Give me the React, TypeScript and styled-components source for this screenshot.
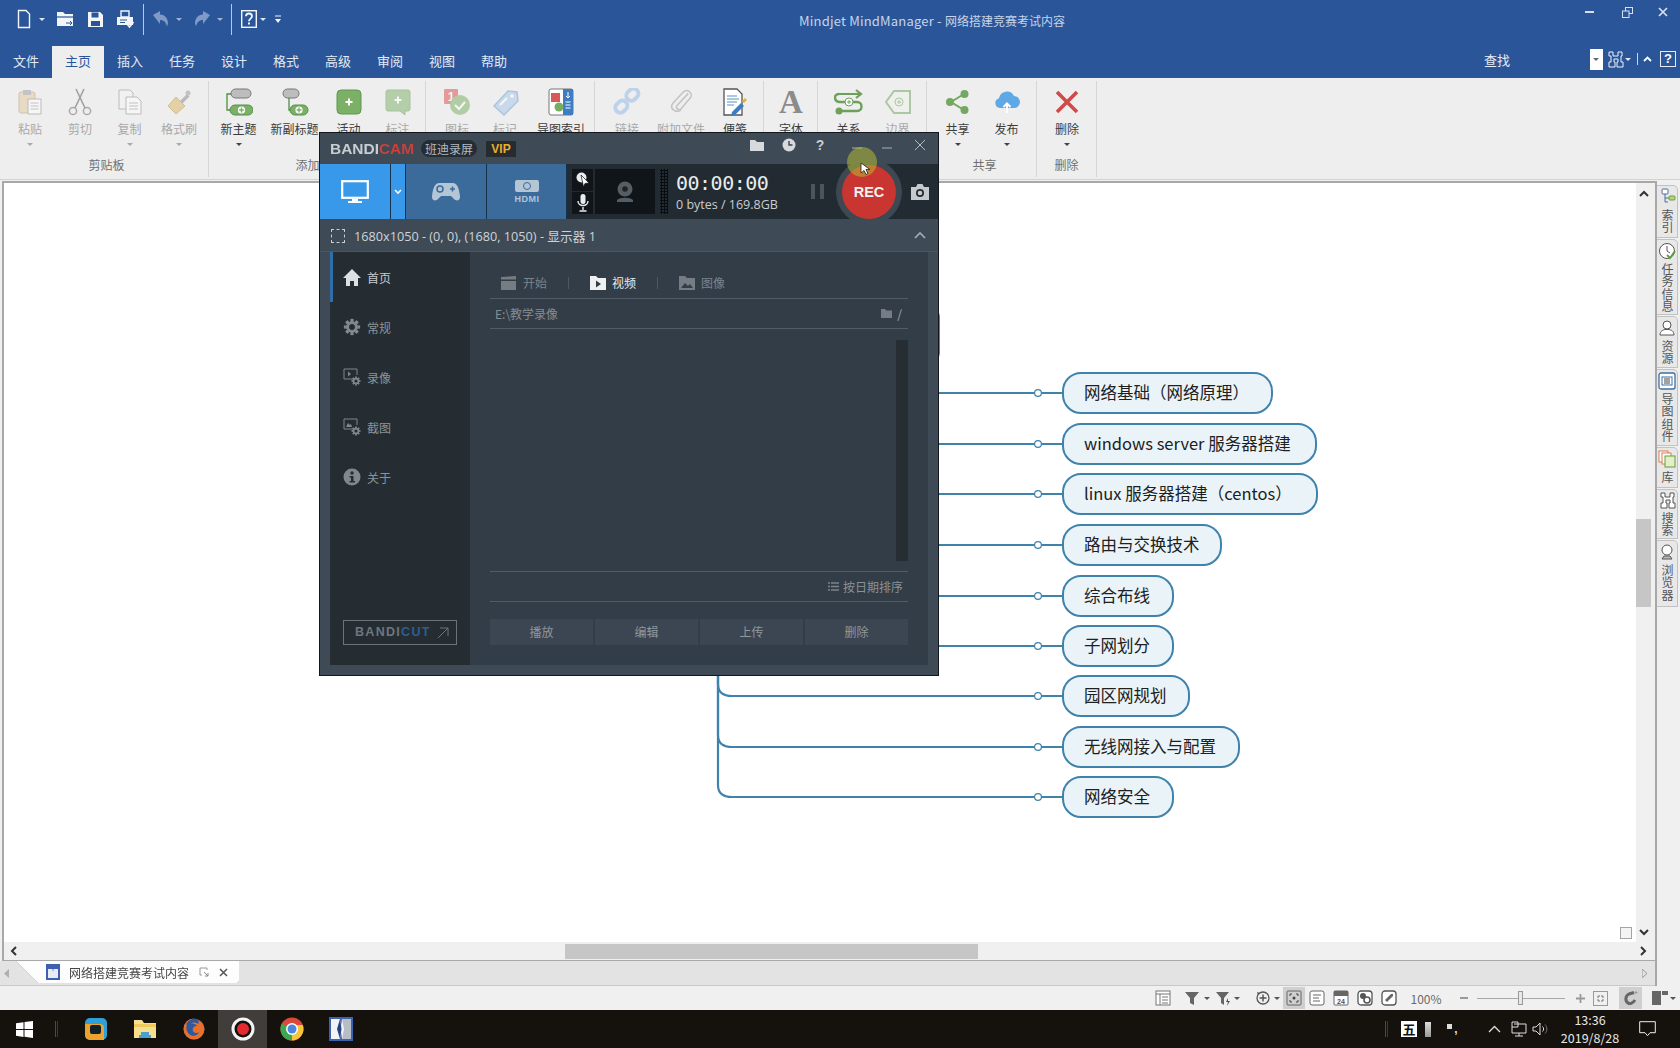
import React from 'react';
import styled, { createGlobalStyle } from 'styled-components';

const Global = createGlobalStyle`
  html, body { margin: 0; padding: 0; background: #fff; }
  * { box-sizing: border-box; }
  body { font-family: "Noto Sans CJK SC", "Noto Sans", "Liberation Sans", sans-serif; }
`;

/* ---------- layout shell ---------- */
const Page = styled.div`
  position: relative; width: 1680px; height: 1048px; overflow: hidden;
  display: flex; flex-direction: column; background: #f0f0f0;
`;
const BlueHead = styled.header`background: #2a5699; height: 78px; display: flex; flex-direction: column;`;
const TitleRow = styled.div`height: 44px; display: flex; align-items: flex-start; position: relative;`;
const Qat = styled.div`display: flex; align-items: center; height: 38px; width: 799px; flex: none;`;
const Title = styled.div`font-size: 13px; line-height: 42px; color: #c6d4e8; letter-spacing: .2px; white-space: nowrap;`;
const TitleCjk = styled.span`font-size: 12px; letter-spacing: 0;`;
const WinBtns = styled.div`margin-left: auto; display: flex; align-items: center; height: 24px;`;
const Slot = styled.div<{ $w: number; $ml: number }>`
  flex: none; width: ${p => p.$w}px; margin-left: ${p => p.$ml}px;
  display: flex; align-items: center; justify-content: center;
`;
const QatSep = styled.div`width: 1px; height: 31px; background: #b9c9e0;`;
const Caret = styled.i<{ $c?: string }>`
  display: block; width: 0; height: 0; border-left: 3px solid transparent; border-right: 3px solid transparent;
  border-top: 3.5px solid ${p => p.$c || '#dfe7f2'};
`;
const TabsRow = styled.nav`height: 34px; display: flex; align-items: flex-end;`;
const MenuTab = styled.div<{ $active?: boolean }>`
  width: 52px; height: 32px; flex: none; text-align: center; font-size: 13px; line-height: 30px;
  background: ${p => p.$active ? '#eeeeee' : 'transparent'}; color: ${p => p.$active ? '#2a5699' : '#e3eaf4'};
`;
const TabsRight = styled.div`margin-left: auto; display: flex; align-items: center; height: 34px; padding-bottom: 4px;`;
const FindBox = styled.div`width: 13px; height: 21px; background: #fff; display: flex; align-items: center; justify-content: center;`;
const FindLabel = styled.span`font-size: 13px; color: #e6ecf5;`;
const HelpBox = styled.div`width: 16px; height: 16px; border: 1px solid #e6ecf5; color: #fff; font: bold 13px/14px "Liberation Sans", sans-serif; text-align: center;`;
const SmallSep = styled.div`width: 1px; height: 12px; background: #c9d6e8;`;

/* ---------- ribbon ---------- */
const Ribbon = styled.section`height: 102px; background: #eeeeee; display: flex; flex: none; border-bottom: 1px solid #d2d2d2;`;
const Group = styled.div<{ $w: number; $pl: number }>`
  width: ${p => p.$w}px; padding-left: ${p => p.$pl}px; flex: none; display: flex; flex-direction: column;
  border-right: 1px solid #d6d6d6; margin: 3px 0 2px;
`;
const GroupItems = styled.div`display: flex; flex: 1;`;
const GroupLabel = styled.div<{ $shift?: number }>`height: 21px; font-size: 12px; line-height: 18px; color: #707070; text-align: center; margin-right: ${p => p.$shift || 0}px;`;
const RItem = styled.div<{ $w: number; $muted?: boolean }>`
  width: ${p => p.$w}px; flex: none; display: flex; flex-direction: column; align-items: center; padding-top: 6px;
  color: ${p => p.$muted ? '#a9a9a9' : '#3c3c3c'};
`;
const RIcon = styled.div<{ $muted?: boolean }>`width: 30px; height: 30px; display: flex; align-items: center; justify-content: center; opacity: ${p => p.$muted ? .5 : 1};`;
const RLabel = styled.div`font-size: 12px; line-height: 16px; margin-top: 4px; white-space: nowrap;`;
const RCaret = styled.div`height: 14px; display: flex; align-items: center;`;
const FontGlyph = styled.span`font: bold 33px/30px "Liberation Serif", serif; color: #8b8b8b;`;

/* ---------- work area ---------- */
const Work = styled.main`flex: 1; display: flex; min-height: 0;`;
const LeftCol = styled.div`width: 1655px; flex: none; display: flex; flex-direction: column; padding-top: 1px;`;
const CanvasFrame = styled.div`
  flex: 1; display: flex; flex-direction: column; margin-left: 2px; min-height: 0;
  border-top: 2px solid #a8a8a8; border-left: 2px solid #a8a8a8; border-bottom: 1px solid #a8a8a8;
`;
const CanvasRow = styled.div`flex: 1; display: flex; min-height: 0;`;
const Canvas = styled.div`position: relative; flex: 1; background: #fff; overflow: hidden;`;
const CornerBox = styled.div`position: absolute; right: 4px; bottom: 3px; width: 12px; height: 12px; border: 1px solid #a4a4a4; background: #f4f4f4;`;
const Lines = styled.svg`position: absolute; left: 0; top: 0;`;
const MapNode = styled.div<{ $x: number; $y: number; $w: number }>`
  position: absolute; left: ${p => p.$x}px; top: ${p => p.$y}px; width: ${p => p.$w}px; height: 42px;
  border: 2.5px solid #3f82ac; border-radius: 19px; background: #e9f3f8; color: #202020;
  font-size: 16.5px; line-height: 36px; padding-left: 20px; white-space: nowrap;
`;
const RootNode = styled.div`
  position: absolute; left: 700px; top: 125px; width: 236px; height: 54px;
  border: 3px solid #2f8fc6; border-radius: 9px; background: #e4f1f9;
`;
const VScroll = styled.div`width: 16px; flex: none; background: #f0f0f0; position: relative; margin-right: 3px; display: flex; flex-direction: column; align-items: center;`;
const VThumb = styled.div`position: absolute; left: 0; top: 336px; width: 15px; height: 88px; background: #c6c6c6;`;
const VTop = styled.div`height: 20px; display: flex; align-items: center;`;
const VBottom = styled.div`margin-top: auto; height: 20px; display: flex; align-items: center;`;
const HScroll = styled.div`height: 18px; flex: none; display: flex; align-items: center; padding: 0 8px 0 6px; background: #f0f0f0;`;
const HThumb = styled.div`width: 413px; height: 15px; background: #c6c6c6; margin-left: 548px; margin-right: auto;`;
const DocTabs = styled.div`height: 25px; flex: none; background: #e3e3e3; border-bottom: 1px solid #c8c8c8; display: flex; padding-right: 8px;`;
const DocArrow = styled.div`width: 16px; display: flex; align-items: center; padding-left: 4px; flex: none;`;
const DocTabWrap = styled.div`filter: drop-shadow(0 0 .6px #777); height: 22px;`;
const DocTab = styled.div`
  width: 223px; height: 22px; background: #fdfdfd; display: flex; align-items: center;
  clip-path: polygon(0 0, 100% 0, 100% calc(100% - 2px), calc(100% - 2px) 100%, 22px 100%);
  padding-left: 30px; font-size: 12px; color: #444;
`;
const DocTabText = styled.span`margin-left: 9px; margin-right: 10px; white-space: nowrap;`;
const DocEnd = styled.div`margin-left: auto; display: flex; align-items: center;`;
const SidePanel = styled.aside`flex: 1; border-left: 2px solid #a8a8a8; margin-top: 1px; padding-top: 4px; display: flex; flex-direction: column; gap: 1px; background: #f0f0f0;`;
const SideTab = styled.div<{ $h: number }>`
  height: ${p => p.$h}px; width: 21px; background: #e8e8e8; border: 1px solid #c2c2c2; border-left: none;
  display: flex; flex-direction: column; align-items: center; padding-top: 2px; border-top-right-radius: 5px;
`;
const SideText = styled.div`writing-mode: vertical-rl; text-orientation: upright; font-size: 12px; line-height: 14px; letter-spacing: .5px; color: #555; margin-top: 3px;`;

/* ---------- status and taskbar ---------- */
const Status = styled.footer`height: 24px; flex: none; background: #f0f0f0; display: flex; align-items: center;`;
const Selected = styled.div<{ $w: number }>`width: ${p => p.$w}px; height: 22px; background: #cfcfcf; display: flex; align-items: center; justify-content: center;`;
const Zoom100 = styled.span`font-size: 12px; color: #6a6a6a;`;
const Slider = styled.div`width: 88px; height: 1px; background: #a8a8a8; position: relative;`;
const SliderThumb = styled.div`position: absolute; left: 41px; top: -7px; width: 5px; height: 14px; background: #e8e8e8; border: 1px solid #999;`;
const Taskbar = styled.footer`height: 38px; flex: none; background: #15120e; display: flex; align-items: stretch;`;
const StartCell = styled.div`width: 48px; flex: none; display: flex; align-items: center; justify-content: center;`;
const TaskSep = styled.div`width: 3px; height: 16px; border-left: 1px solid #4a4a4a; border-right: 1px solid #3a3a3a; align-self: center; margin: 0 13px 0 7px; flex: none;`;
const TraySep = styled.div`width: 3px; height: 16px; border-left: 1px solid #4a4a4a; border-right: 1px solid #3a3a3a; flex: none;`;
const TaskCell = styled.div<{ $active?: boolean }>`width: 49px; flex: none; display: flex; align-items: center; justify-content: center; background: ${p => p.$active ? '#403d3a' : 'transparent'};`;
const Tray = styled.div`margin-left: auto; display: flex; align-items: center;`;
const Ime = styled.div`width: 16px; height: 16px; background: #fff; color: #111; font-size: 13px; line-height: 16px; font-weight: 700; text-align: center;`;
const ImeBar = styled.div`width: 6px; height: 15px; background: linear-gradient(#ddd, #999);`;
const ImeDot = styled.div`width: 5px; height: 5px; background: #ddd; margin-bottom: 6px;`;
const ImeComma = styled.span`color: #ddd; font: bold 12px/12px "Liberation Sans", sans-serif;`;
const Clock = styled.div`color: #e8e8e8; font-size: 12.5px; line-height: 18px; text-align: center; white-space: nowrap;`;

/* ---------- bandicam ---------- */
const BWin = styled.div`
  position: absolute; left: 319px; top: 132px; width: 620px; height: 544px; z-index: 5;
  display: flex; flex-direction: column; background: #3e4a56; border: 1px solid #11171c;
`;
const BHead = styled.div`height: 31px; flex: none; display: flex; align-items: center; padding-left: 10px;`;
const BLogo = styled.div`
  width: 86px; flex: none; font: bold 15px/20px "Liberation Sans", sans-serif; letter-spacing: 0; color: #c7ccd1;
  white-space: nowrap; transform: scaleX(1.03); transform-origin: left;
`;
const BHelpMark = styled.span`font: bold 14px/20px "Liberation Sans", sans-serif; color: #c7ccd1;`;
const BLogoRed = styled.span<{ $c?: string }>`color: ${p => p.$c || '#c8413c'};`;
const BPill = styled.div`margin-left: 5px; height: 17px; width: 56px; border-radius: 9px; background: #252d34; color: #b4bac0; font-size: 12px; line-height: 17px; text-align: center; white-space: nowrap;`;
const BVip = styled.div`margin-left: 9px; width: 30px; height: 16px; background: #262b2e; color: #e8ae2e; font: bold 12px/16px "Liberation Sans", sans-serif; text-align: center;`;
const BHeadIcons = styled.div`margin-left: auto; display: flex; align-items: center; padding: 0 12px 7px 0;`;
const BTool = styled.div`height: 55px; flex: none; display: flex; background: #222b32; overflow: hidden; align-items: stretch;`;
const BTab = styled.div<{ $w: number; $on?: boolean }>`
  width: ${p => p.$w}px; flex: none; display: flex; align-items: center; justify-content: center;
  background: ${p => p.$on ? '#3898ea' : '#3a6b9b'}; border-right: 1px solid #16324d;
`;
const MicCol = styled.div`width: 21px; margin: 5px 2px 5px 5px; flex: none; display: flex; flex-direction: column; gap: 1px;`;
const MicCell = styled.div`flex: 1; background: #10151a; display: flex; align-items: center; justify-content: center;`;
const CamCell = styled.div`width: 60px; margin: 5px 0; flex: none; background: #10151a; display: flex; align-items: center; justify-content: center;`;
const Dots = styled.div`
  width: 8px; margin: 5px 0 5px 5px; flex: none;
  background-image: radial-gradient(#0a0d10 1px, transparent 1.2px); background-size: 3px 3px;
`;
const TimerBox = styled.div`width: 135px; margin-left: 8px; flex: none; display: flex; flex-direction: column; justify-content: center;`;
const TimerText = styled.div`font: 400 20px/26px "DejaVu Sans Mono", monospace; letter-spacing: -.5px; color: #e8ecef; white-space: nowrap;`;
const BytesText = styled.div`font: 400 12.5px/18px "Open Sans", sans-serif; color: #c8cdd2; white-space: nowrap;`;
const Pause = styled.div`width: 14px; flex: none; display: flex; gap: 5px; align-items: center;`;
const PauseBar = styled.i`display: block; width: 4px; height: 15px; background: #4b555f;`;
const RecRing = styled.div`width: 66px; height: 66px; margin: -5.5px 0 0 11px; flex: none; border-radius: 50%; background: #3d4853; display: flex; align-items: center; justify-content: center;`;
const RecBtn = styled.div`width: 54px; height: 54px; border-radius: 50%; background: #c93530; color: #f2f2f2; font: bold 14.5px/54px "Liberation Sans", sans-serif; text-align: center;`;
const CamBtn = styled.div`width: 24px; margin-left: 6px; flex: none; display: flex; align-items: center; justify-content: center;`;
const BSource = styled.div`height: 33px; flex: none; display: flex; align-items: center; padding: 2px 12px 0 11px; border-bottom: 1px solid #4a5662;`;
const DashBox = styled.div`width: 14px; height: 14px; border: 1px dashed #c9cdd1; flex: none;`;
const SourceText = styled.div`margin-left: 9px; font: 400 12.7px/18px "Open Sans", "Noto Sans CJK SC", sans-serif; color: #cfd3d7; white-space: nowrap;`;
const SourceChev = styled.div`margin: -2px 0 0 auto; line-height: 0;`;
const BMain = styled.div`flex: 1; display: flex; margin: 0 10px 10px; min-height: 0;`;
const BSide = styled.div`width: 140px; flex: none; background: #252d33; display: flex; flex-direction: column;`;
const SideItem = styled.div<{ $on?: boolean }>`
  height: 50px; flex: none; display: flex; align-items: center; padding-left: 10px; font-size: 12px;
  border-left: 3px solid ${p => p.$on ? '#2f6ea8' : 'transparent'}; color: ${p => p.$on ? '#c6cbd0' : '#8c9399'};
`;
const SideIcon = styled.div`width: 18px; height: 18px; flex: none; margin-right: 6px; display: flex; align-items: center; justify-content: center;`;
const CutBtn = styled.div`
  margin: auto 13px 20px; height: 25px; width: 114px; border: 1px solid #6c747a; display: flex; align-items: center; justify-content: space-between;
  padding: 0 7px 0 11px; font: 900 12.5px/1 "Liberation Sans", sans-serif; letter-spacing: 1.3px; color: #6f767c;
`;
const BContent = styled.div`flex: 1; background: #333d47; padding: 0 20px 20px; display: flex; flex-direction: column; min-width: 0;`;
const CTabs = styled.div`height: 47px; flex: none; display: flex; align-items: center; padding: 15px 0 0 11px; gap: 21px; border-bottom: 1px solid #515c67;`;
const CTab = styled.div<{ $on?: boolean }>`display: flex; align-items: center; gap: 6px; font-size: 12px; color: ${p => p.$on ? '#e8ebee' : '#7c848b'};`;
const CDivider = styled.div`width: 1px; height: 12px; background: #4d5863;`;
const PathRow = styled.div`height: 30px; flex: none; display: flex; align-items: center; padding: 0 6px 0 5px; font-size: 12px; color: #858c93; border-bottom: 1px solid #515c67;`;
const PathEnd = styled.div`margin-left: auto; display: flex; align-items: center; gap: 5px; color: #a6acb2;`;
const ListArea = styled.div`flex: 1; display: flex; justify-content: flex-end; padding: 11px 0 10px; border-bottom: 1px solid #515c67;`;
const ListBar = styled.div`width: 12px; background: #262e34;`;
const SortRow = styled.div`height: 30px; flex: none; display: flex; align-items: center; justify-content: flex-end; gap: 4px; padding-right: 5px; font-size: 12px; color: #8a9198; border-bottom: 1px solid #515c67;`;
const ActRow = styled.div`margin-top: 17px; height: 26px; flex: none; display: flex; gap: 2px;`;
const ActBtn = styled.div`flex: 1; background: #3b4652; color: #90979d; font-size: 12px; line-height: 26px; text-align: center;`;
const Spot = styled.div`position: absolute; left: 527px; top: 14px; width: 30px; height: 30px; border-radius: 50%; background: rgba(190,198,50,.5); z-index: 2;`;
const Pointer = styled.svg`position: absolute; left: 540px; top: 29px; z-index: 3;`;

/* ---------- helpers ---------- */
type P = { c: number; w: number; n: React.ReactNode };
const place = (start: number, items: P[]) => {
  let end = start;
  return items.map((it, i) => {
    const ml = i === 0 && start < 0 ? 0 : it.c - it.w / 2 - end;
    end = it.c + it.w / 2;
    return <Slot key={i} $w={it.w} $ml={ml}>{it.n}</Slot>;
  });
};
const S = (w: number, h: number, n: React.ReactNode, vb?: string) => <svg width={w} height={h} viewBox={vb || `0 0 ${w} ${h}`}>{n}</svg>;

/* ---------- qat icons ---------- */
const W = '#f2f5fa';
const qNew = S(14, 20, <path d="M1.5 1.5H9l3.5 3.5v13.5h-11z" fill="none" stroke={W} strokeWidth="1.4" />);
const qOpen = S(18, 18, <><path d="M1 2h6l2 2h8v12H1z" fill={W} /><path d="M1 7h16" stroke="#2a5699" strokeWidth="1.2" /><path d="M10 13h6M14 11l2 2-2 2" stroke="#2a5699" fill="none" /></>);
const qSave = S(17, 17, <><path d="M1 1h12l3 3v12H1z" fill={W} /><path d="M4.5 1.5h7v5h-7z" fill="#2a5699" /><path d="M4 10h9v5H4z" fill="#2a5699" /></>);
const qPrint = S(18, 19, <><path d="M5 1h8v6H5z" fill="none" stroke={W} strokeWidth="1.4" /><path d="M1 7h16v8H1z" fill={W} /><path d="M4 10h7M4 12.5h5" stroke="#2a5699" /><path d="M11 14l2.5 3 4-5" stroke={W} strokeWidth="1.6" fill="none" /></>);
const arrowPath = 'M1 5l7-4v3.500c5 0 8 4 8 9l-1 3c-1-4-3-6.500-7-6.500V14z';
const qUndo = S(18, 18, <path d={arrowPath} fill="#7f9ac4" />);
const qRedo = S(18, 18, <path d={arrowPath} fill="#7f9ac4" transform="translate(18 0) scale(-1 1)" />);
const qHelp = S(16, 18, <><rect x=".7" y=".7" width="14.600" height="16.600" fill="none" stroke={W} strokeWidth="1.400" /><path d="M5 6.200c0-3.600 6-3.600 6 0 0 2.500-3 2.300-3 5" fill="none" stroke={W} strokeWidth="1.800" /><rect x="7" y="12.500" width="2" height="2" fill={W} /></>);
const qCustom = S(8, 9, <><path d="M1 1h6" stroke={W} /><path d="M1 4h6L4 8z" fill={W} /></>);
const binoPath = 'M2 1h4v4h5V1h4v4h-1v6h2v5h-6v-5h1V8H7v3h1v5H2v-5h2V5H2z';

/* ---------- ribbon icons ---------- */
const G = '#7cb067';
const pillPlus = (x: number, y: number, w: number) => <><rect x={x} y={y} width={w} height="10" rx="5" fill={G} stroke="#55904a" /><circle cx={x + w / 2} cy={y + 5} r="3.600" fill="#fff" /><path d={`M${x + w / 2 - 2.400} ${y + 5}h4.800M${x + w / 2} ${y + 2.600}v4.800`} stroke={G} strokeWidth="1.400" /></>;
const iPaste = S(26, 26, <><rect x="2" y="3" width="16" height="21" rx="2" fill="#e4c89a" stroke="#b69868" /><rect x="6" y="1" width="8" height="5" fill="#9a9a9a" /><path d="M11 10h13v15H11z" fill="#fff" stroke="#888" /><path d="M13.500 14h8M13.500 17h8M13.500 20h8" stroke="#999" /></>);
const iScissor = S(24, 28, <><circle cx="5" cy="23" r="3.600" fill="none" stroke="#666" strokeWidth="1.500" /><circle cx="19" cy="23" r="3.600" fill="none" stroke="#666" strokeWidth="1.500" /><path d="M7 20L16 1M17 20L8 1" stroke="#555" strokeWidth="1.600" /></>);
const iCopy = S(26, 26, <><path d="M2 1h11l3 3v16H2z" fill="#f4f4f4" stroke="#8a8a8a" /><path d="M9 8h11l4 4v13H9z" fill="#fff" stroke="#8a8a8a" /><path d="M12 14h9M12 17h9M12 20h9" stroke="#999" /></>);
const iBrush = S(26, 26, <><path d="M14 12l7-7 2.500 2.500-7 7z" fill="#888" /><circle cx="22" cy="4" r="2.500" fill="#999" /><path d="M10 8l9 9-9 8-8-8z" fill="#dcb35e" stroke="#b58e3c" /></>);
const iNewTopic = S(28, 28, <><rect x="6" y="1" width="20" height="9" rx="4.500" fill="#bdbdbd" stroke="#777" /><path d="M6 6H2v16h5" fill="none" stroke="#4f8f43" strokeWidth="1.300" />{pillPlus(5, 17, 23)}</>);
const iNewSub = S(28, 28, <><rect x="2" y="1" width="16" height="9" rx="4.500" fill="#bdbdbd" stroke="#777" /><path d="M8 10v12h3" fill="none" stroke="#4f8f43" strokeWidth="1.300" />{pillPlus(9, 17, 18)}</>);
const iActivity = S(26, 26, <><rect x="1" y="1" width="24" height="24" rx="4" fill={G} stroke="#5c9a4c" /><path d="M13 9.500v7M9.500 13h7" stroke="#fff" strokeWidth="2" /></>);
const iCallout = S(26, 26, <><path d="M3 1h20a2 2 0 012 2v17a2 2 0 01-2 2h-3v4l-5-4H3a2 2 0 01-2-2V3a2 2 0 012-2z" fill={G} stroke="#5c9a4c" /><path d="M13 7.500v7M9.500 11h7" stroke="#fff" strokeWidth="2" /></>);
const iMarkers = S(28, 28, <><rect x="1" y="1" width="14" height="15" rx="1" fill="#d8484a" /><text x="8" y="13" fontSize="12" fontFamily="Liberation Sans" fill="#fff" textAnchor="middle" fontWeight="700">1</text><circle cx="17" cy="17" r="10" fill="#77ad5f" /><path d="M12 17l4 4 6-7" stroke="#fff" strokeWidth="2" fill="none" /></>);
const iTag = S(28, 28, <><path d="M3 18L17 3l9 1 1 9-14 14z" fill="#a5c6ea" stroke="#6d9ccf" strokeWidth="1.500" /><path d="M9 17l7-7" stroke="#fff" strokeWidth="2" /><circle cx="21" cy="8" r="1.800" fill="#fff" /></>);
const iIndex = S(26, 28, <><rect x="1" y="1" width="24" height="26" rx="2" fill="#fff" stroke="#777" /><rect x="15" y="1" width="10" height="26" fill="#3e7dc2" /><rect x="3" y="5" width="9" height="9" fill="#d9585a" /><circle cx="11" cy="19" r="4.500" fill="#77ad5f" /><path d="M20 4v6M18 8l2 2 2-2M17.500 14h5M17.500 17h5M17.500 20h5" stroke="#fff" fill="none" /></>);
const iLink = S(28, 28, <g fill="none" stroke="#8fb8e6" strokeWidth="4"><rect x="13" y="2" width="13" height="10" rx="5" transform="rotate(-45 19 7)" /><rect x="2" y="14" width="13" height="10" rx="5" transform="rotate(-45 8 19)" /></g>);
const iClip = S(26, 28, <path d="M21 8L9 21c-3 3 2 6 4 4L23 13c4-5-3-11-8-6L4 19c-4 6 4 11 9 7" transform="translate(1 -2) scale(.92)" fill="none" stroke="#999" strokeWidth="1.700" />);
const iNote = S(26, 28, <><path d="M2 1h13l5 5v21H2z" fill="#fff" stroke="#555" strokeWidth="1.300" /><path d="M5 8h10M5 11h12M5 14h10M5 17h7" stroke="#5a8fc7" /><path d="M10 24l9-9 3 3-9 9-4 1z" fill="#3e7dc2" /><path d="M20 13l3-3 2 2-3 3z" fill="#e0b040" /></>);
const iRelation = S(30, 26, <><path d="M5 5h21M22 1l5 4-5 4" stroke="#6ea05a" strokeWidth="2.200" fill="none" /><path d="M5 5C-1 5 0 13 6 13h17c6 0 6 9 0 9H6" fill="none" stroke="#6ea05a" strokeWidth="2.400" /><circle cx="5" cy="22" r="3.500" fill="#6ea05a" /><circle cx="15" cy="13" r="4" fill="#fff" stroke="#6ea05a" /><path d="M13 13h4M15 11v4" stroke="#6ea05a" /></>);
const iBoundary = S(28, 26, <><path d="M26 2H10L2 13l8 11h16z" fill="#eef5ea" stroke="#6ea05a" strokeWidth="2" /><circle cx="15" cy="13" r="4" fill="none" stroke="#6ea05a" /><path d="M13 13h4M15 11v4" stroke="#6ea05a" /></>);
const iShare = S(26, 26, <><path d="M19 5L6 13l13 8" stroke="#74a860" strokeWidth="2" fill="none" /><circle cx="19.500" cy="5" r="4" fill="#74a860" /><circle cx="5" cy="13" r="4" fill="#74a860" /><circle cx="19.500" cy="21" r="4" fill="#74a860" /></>);
const iCloud = S(26, 26, <><path d="M6 19a5 5 0 01-1-9.800A8 8 0 0120 7a6 6 0 010 12z" fill="#5fa8e6" /><path d="M13 24v-9M9.500 18l3.500-3.500 3.500 3.500" stroke="#fff" strokeWidth="2" fill="none" /></>);
const iDelete = S(24, 24, <path d="M2 2l20 20M22 2L2 22" stroke="#d04a47" strokeWidth="3.600" />);

/* ---------- side tab icons ---------- */
const sIndex = S(18, 18, <><rect x="4" y="1" width="6" height="5" rx="1" fill="#fff" stroke="#4a6f9a" /><path d="M7 6v8h3M7 10h4" stroke="#4a6f9a" fill="none" /><rect x="11" y="8" width="6" height="4" rx="1" fill="#b5d67a" stroke="#6c9a3c" /></>);
const sTask = S(18, 18, <><circle cx="9" cy="9" r="7.500" fill="#fff" stroke="#555" /><path d="M9 4v5l3 2" stroke="#555" fill="none" /><path d="M9 13l3 3 5-7" stroke="#5b9e3a" strokeWidth="1.800" fill="none" /></>);
const sRes = S(18, 18, <><circle cx="9" cy="6" r="4" fill="#fff" stroke="#555" /><path d="M2 16c0-4 3-5 5-5.500h4c2 .500 5 1.500 5 5.500z" fill="#fff" stroke="#555" /></>);
const sPart = S(18, 18, <><rect x="1" y="1" width="16" height="16" rx="2" fill="#fff" stroke="#3d6ea5" strokeWidth="1.300" /><rect x="4" y="5" width="10" height="8" fill="none" stroke="#3d6ea5" /><path d="M6 7h6M6 9h6M6 11h6" stroke="#444" /></>);
const sLib = S(18, 18, <><rect x="1" y="1" width="9" height="11" fill="#fff" stroke="#d97a4a" /><rect x="4" y="3" width="9" height="11" fill="#fff" stroke="#d97a4a" /><rect x="7" y="6" width="10" height="11" fill="#e2f0c8" stroke="#6c9a3c" /></>);
const sFind = S(17, 17, <path d={binoPath} fill="#fff" stroke="#555" />);
const sBrowser = S(18, 18, <><circle cx="9" cy="7" r="5" fill="#fff" stroke="#555" /><path d="M4 16h10l-2-3H6z" fill="#bbb" stroke="#555" /></>);

/* ---------- status icons ---------- */
const GR = '#777';
const stList = S(16, 16, <><rect x="1" y="1" width="14" height="14" fill="#fff" stroke={GR} /><path d="M1 4h14M5 4v11M7 7h6M7 10h6M7 13h6" stroke={GR} /></>);
const stFilter = S(14, 14, <path d="M0 1h14L9 7v7l-4-2V7z" fill="#666" />);
const stFilter2 = S(15, 15, <><path d="M0 1h13L8 7v7l-3-2V7z" fill="#666" /><path d="M12 7l-2 4h2l-1 4 3-5h-2z" fill="#555" /></>);
const stPlus = S(18, 18, <><circle cx="9" cy="9" r="6" fill="none" stroke="#555" strokeWidth="1.300" /><path d="M9 5.500v7M5.500 9h7" stroke="#555" strokeWidth="1.500" /><path d="M3 3l3 1-2 2z" fill="#555" /></>);
const stFit = S(16, 16, <><rect x="1" y="1" width="14" height="14" rx="1" fill="none" stroke="#666" /><circle cx="8" cy="8" r="1.500" fill="#444" /><path d="M4 4h2M4 4v2M12 4h-2M12 4v2M4 12h2M4 12v-2M12 12h-2M12 12v-2" stroke="#444" /></>);
const stNote = S(16, 16, <><rect x="1" y="1" width="14" height="14" rx="2" fill="#fff" stroke="#666" /><path d="M4 5h8M4 8h6M4 11h7" stroke="#666" /></>);
const stCal = S(16, 16, <><rect x="1" y="1" width="14" height="14" rx="1" fill="#fff" stroke="#666" /><rect x="1" y="1" width="14" height="5" fill="#666" /><text x="8" y="14" fontSize="7" fontWeight="700" fontFamily="Liberation Sans" fill="#555" textAnchor="middle">24</text></>);
const stRes = S(16, 16, <><rect x="1" y="1" width="14" height="14" rx="3" fill="#fff" stroke="#555" strokeWidth="1.300" /><circle cx="6" cy="6" r="3" fill="#555" /><circle cx="10" cy="10" r="3" fill="none" stroke="#555" strokeWidth="1.600" /></>);
const stTag = S(16, 16, <><rect x="1" y="1" width="14" height="14" rx="3" fill="#fff" stroke="#555" strokeWidth="1.300" /><path d="M4 10l6-6h2v2l-6 6z" fill="#666" /></>);
const stFit2 = S(15, 15, <><rect x=".5" y=".5" width="14" height="14" fill="none" stroke="#999" /><path d="M5 5h2M5 5v2M10 5H8M10 5v2M5 10h2M5 10V8M10 10H8M10 10V8" stroke="#777" /></>);
const stMag = S(16, 16, <><path d="M12 2.500L7 4C3 6 3 11 6 13c2 1.500 5 0 7-3" fill="none" stroke="#666" strokeWidth="3" /><path d="M14 1v3M12.500 2.500h3" stroke="#999" /></>);
const stPanel = S(16, 16, <><rect x="0" y="1" width="9" height="14" fill="#666" /><rect x="10" y="1" width="6" height="4" fill="#666" /></>);

/* ---------- taskbar icons ---------- */
const tWin = S(17, 17, <path d="M0 2.300L7.500 1.200V8H0zM8.500 1L17 0v8H8.500zM0 9h7.500v6.900L0 14.800zM8.500 9H17v8l-8.500-1.200z" fill="#fff" />);
const tVm = S(22, 22, <><rect x="0" y="0" width="22" height="22" rx="5" fill="#2f9fd8" /><path d="M0 6h15a4 4 0 014 4v12H5a5 5 0 01-5-5z" fill="#eba32e" /><rect x="5" y="7" width="11" height="9" rx="2" fill="#12202a" /></>);
const tFolder = S(22, 20, <><path d="M0 1h8l2 3h12v15H0z" fill="#f7df90" /><path d="M0 5h22v3H0z" fill="#edc95e" /><path d="M7 13h8v6H7z" fill="#46a0d0" /><path d="M5 19h12v-3H5z" fill="#46a0d0" /></>);
const tFox = S(22, 22, <><circle cx="11" cy="11" r="10.500" fill="#2d5a9e" /><path d="M11 .5A10.500 10.500 0 1021.500 11C21 6 18 3 15 2c1 2 1 3 0 4-2-2-6-2-7 0 2-1 5 0 6 2-3 0-5 2-4 5 1 2 4 3 6 1-1 4-7 5-10 2-3-3-3-7-2-9L3 6c2-3 5-5 8-5.500z" fill="#e8702a" /></>);
const tBandi = S(24, 24, <><circle cx="12" cy="12" r="10" fill="#111" stroke="#f4f4f4" strokeWidth="3" /><circle cx="12" cy="12" r="6" fill="#e32a2e" /></>);
const tChrome = S(24, 24, <><circle cx="12" cy="12" r="11.500" fill="#d94a3c" /><path d="M12 12L1.800 6.500A11.500 11.500 0 0012 23.500z" fill="#3da64f" /><path d="M12 12v11.500A11.500 11.500 0 0022.800 8H12z" fill="#f5c63a" /><circle cx="12" cy="12" r="6" fill="#fff" /><circle cx="12" cy="12" r="4.500" fill="#4a88e0" /></>);
const tMind = S(24, 24, <><rect width="24" height="24" fill="#3a62b0" /><path d="M2 2h9l1 7 1-7h9v20h-9l-1-7-1 7H2z" fill="#f2f4f8" /><path d="M13 2h9v20h-9l2-10z" fill="#b7bcc6" /><path d="M11 2l1.500 10L11 22l-3-10z" fill="#26417f" /></>);

/* ---------- bandicam icons ---------- */
const bFolder = S(14, 12, <path d="M0 1h5l2 2h7v9H0z" fill="#d6dadd" />);
const bClock = S(14, 14, <><circle cx="7" cy="7" r="6.500" fill="#d6dadd" /><path d="M7 3v4h3.500" stroke="#3a4651" strokeWidth="1.400" fill="none" /></>);
const bMin = S(12, 8, <path d="M1 7h10" stroke="#aab0b6" strokeWidth="1" />);
const bClose = S(12, 12, <path d="M1 1l10 10M11 1L1 11" stroke="#b5bbc0" strokeWidth="1" />);
const bScreen = S(28, 24, <><rect x="1.200" y="1.200" width="25.600" height="16.600" fill="none" stroke="#fff" strokeWidth="2.200" /><path d="M11 19h6v2h4v2H7v-2h4z" fill="#fff" /></>);
const bChevD = S(8, 6, <path d="M1 1l3 3 3-3" stroke="#fff" strokeWidth="1.600" fill="none" />);
const bPadDots = S(28, 18, <><path d="M7 0h14c4 0 6 5 7 13 .5 4-3 6-6 3l-3-3H9l-3 3c-3 3-6.500 1-6-3C1 5 3 0 7 0z" fill="#b4c5d6" /><circle cx="8" cy="6" r="3" fill="none" stroke="#3a6b9b" strokeWidth="1.500" /><path d="M18 6h5M20.500 3.500v5" stroke="#3a6b9b" strokeWidth="1.500" /></>);
const bMouse = S(14, 16, <><circle cx="5.500" cy="5.500" r="5" fill="#e8ecef" /><path d="M5 3l8 8-4 .4-1.500 3.600z" fill="#fff" stroke="#111" strokeWidth=".7" /></>);
const bMic = S(12, 18, <><rect x="3.500" y="0" width="5" height="10" rx="2.500" fill="#e8ecef" /><path d="M1 7c0 6 10 6 10 0M6 13v3M2.500 17h7" stroke="#e8ecef" strokeWidth="1.400" fill="none" /></>);
const bWeb = S(18, 22, <><circle cx="9" cy="8" r="7.500" fill="#565e65" /><circle cx="9" cy="8" r="2.800" fill="#222" /><path d="M1 19c3-3 13-3 16 0v2H1z" fill="#565e65" /></>);
const bCam = S(18, 16, <><path d="M0 3h5l1.500-3h5L13 3h5v13H0z" fill="#c5cace" /><circle cx="9" cy="9" r="4" fill="#222b32" /><circle cx="9" cy="9" r="2.300" fill="#c5cace" /></>);
const bChevU = S(12, 8, <path d="M1 7l5-5 5 5" stroke="#a7adb3" strokeWidth="1.600" fill="none" />);
const c1 = '#dde0e3', c2 = '#80878d';
const bHome = S(18, 17, <path d="M9 0L0 9h3v8h4v-5h4v5h4V9h3z" fill={c1} />);
const gear = (cx: number, cy: number, r: number, f: string) => (
  <g fill={f}>
    <circle cx={cx} cy={cy} r={r} />
    {[0, 45, 90, 135].map(a => <rect key={a} x={cx - r * .28} y={cy - r * 1.4} width={r * .56} height={r * 2.8} transform={`rotate(${a} ${cx} ${cy})`} />)}
    <circle cx={cx} cy={cy} r={r * .5} fill="#252d33" />
  </g>
);
const bGear = S(18, 18, gear(9, 9, 5.800, c2));
const bRec = S(18, 18, <><path d="M10 11H1V1h13v6" fill="none" stroke={c2} /><path d="M5 3.500l3 2.500-3 2.500z" fill={c2} />{gear(13, 13, 3.200, c2)}</>);
const bShot = S(18, 18, <><path d="M10 11H1V1h13v6" fill="none" stroke={c2} /><path d="M3 9l2-4 2 2 1-1 1 3z" fill={c2} />{gear(13, 13, 3.200, c2)}</>);
const bInfo = S(18, 18, <><circle cx="9" cy="9" r="8.500" fill={c2} /><circle cx="9" cy="5" r="1.700" fill="#252d33" /><path d="M6.500 8h4v5h1.500v1.500H6.500V13H8V9.500H6.500z" fill="#252d33" /></>);
const bArrow = S(12, 12, <path d="M1 11L11 1M3 1h8v8" stroke="#6f767c" fill="none" />);
const bClap = S(16, 14, <><path d="M0 5h15v9H0z" fill="#757c83" /><path d="M0 1l15-1v3.500H0z" fill="#757c83" /></>);
const bPlay = S(16, 14, <><path d="M0 0h6l2 2h8v12H0z" fill="#eef0f2" /><path d="M6 4.500l5 3.500-5 3.500z" fill="#333d47" /></>);
const bPic = S(16, 14, <><path d="M0 0h6l2 2h8v12H0z" fill="#757c83" /><path d="M2 12l4-5 3 3 2-2 3 4z" fill="#333d47" /></>);
const bSmallFolder = S(11, 9, <path d="M0 0h4l1.500 1.500H11V9H0z" fill="#757c83" />);
const bList = S(11, 9, <path d="M0 1h2M3 1h8M0 4.500h2M3 4.500h8M0 8h2M3 8h8" stroke="#7d848a" strokeWidth="1.400" />);

/* ---------- data ---------- */
const ribbon = [
  { w: 209, pl: 5, label: '剪贴板', items: [
    { t: '粘贴', w: 50, i: iPaste, m: 1, car: 1 }, { t: '剪切', w: 50, i: iScissor, m: 1 },
    { t: '复制', w: 49, i: iCopy, m: 1, car: 1 }, { t: '格式刷', w: 50, i: iBrush, m: 1, car: 1 }] },
  { w: 217, pl: 3, label: '添加', shift: 22, items: [
    { t: '新主题', w: 53, i: iNewTopic, car: 1 }, { t: '新副标题', w: 59, i: iNewSub },
    { t: '活动', w: 49, i: iActivity }, { t: '标注', w: 49, i: iCallout, m: 1 }] },
  { w: 169, pl: 7, label: '', items: [
    { t: '图标', w: 48, i: iMarkers, m: 1 }, { t: '标记', w: 48, i: iTag, m: 1 }, { t: '导图索引', w: 64, i: iIndex }] },
  { w: 169, pl: 5, label: '', items: [
    { t: '链接', w: 54, i: iLink, m: 1 }, { t: '附加文件', w: 54, i: iClip, m: 1 }, { t: '便笺', w: 54, i: iNote }] },
  { w: 54, pl: 1, label: '', items: [{ t: '字体', w: 52, i: <FontGlyph>A</FontGlyph> }] },
  { w: 109, pl: 6, label: '', items: [{ t: '关系', w: 49, i: iRelation }, { t: '边界', w: 49, i: iBoundary, m: 1 }] },
  { w: 110, pl: 6, label: '共享', items: [{ t: '共享', w: 49, i: iShare, car: 1 }, { t: '发布', w: 49, i: iCloud, car: 1 }] },
  { w: 60, pl: 0, label: '删除', items: [{ t: '删除', w: 60, i: iDelete, car: 1 }] },
];
const tabs = ['文件', '主页', '插入', '任务', '设计', '格式', '高级', '审阅', '视图', '帮助'];
const nodes = [
  { t: '网络基础（网络原理）', cy: 393, r: 1273 }, { t: 'windows server 服务器搭建', cy: 444, r: 1317 },
  { t: 'linux 服务器搭建（centos）', cy: 494, r: 1318 }, { t: '路由与交换技术', cy: 545, r: 1222 },
  { t: '综合布线', cy: 596, r: 1174 }, { t: '子网划分', cy: 646, r: 1174 },
  { t: '园区网规划', cy: 696, r: 1190 }, { t: '无线网接入与配置', cy: 747, r: 1240 }, { t: '网络安全', cy: 797, r: 1174 },
];
const CX = 4, CY = 183;
const sideTabs = [
  { t: '索引', h: 53, i: sIndex }, { t: '任务信息', h: 76, i: sTask }, { t: '资源', h: 52, i: sRes },
  { t: '导图组件', h: 77, i: sPart }, { t: '库', h: 41, i: sLib }, { t: '搜索', h: 50, i: sFind }, { t: '浏览器', h: 67, i: sBrowser },
];
const sideItems = [
  { t: '首页', i: bHome, on: true }, { t: '常规', i: bGear }, { t: '录像', i: bRec }, { t: '截图', i: bShot }, { t: '关于', i: bInfo },
];

const line = '#3f82ac';

export default function App() {
  return (
    <Page>
      <Global />
      <BlueHead>
        <TitleRow>
          <Qat>
            {place(0, [
              { c: 24, w: 16, n: qNew }, { c: 42, w: 8, n: <Caret /> }, { c: 65, w: 18, n: qOpen }, { c: 95, w: 18, n: qSave },
              { c: 125, w: 18, n: qPrint }, { c: 143, w: 1, n: <QatSep /> }, { c: 161, w: 18, n: qUndo }, { c: 179, w: 8, n: <Caret $c="#9fb4d4" /> },
              { c: 202, w: 18, n: qRedo }, { c: 220, w: 8, n: <Caret $c="#9fb4d4" /> }, { c: 231, w: 1, n: <QatSep /> },
              { c: 249, w: 16, n: qHelp }, { c: 263, w: 8, n: <Caret /> }, { c: 278, w: 8, n: qCustom },
            ])}
          </Qat>
          <Title>Mindjet MindManager - <TitleCjk>网络搭建竞赛考试内容</TitleCjk></Title>
          <WinBtns>
            {place(-1, [
              { c: 1590, w: 12, n: S(10, 4, <path d="M0 2h9" stroke="#d7e0ee" strokeWidth="2" />) },
              { c: 1627, w: 12, n: S(11, 11, <><rect x="3.500" y=".5" width="7" height="6" fill="none" stroke="#d7e0ee" /><rect x=".5" y="4" width="6.500" height="6.500" fill="#2a5699" stroke="#d7e0ee" /></>) },
              { c: 1663, w: 12, n: S(10, 10, <path d="M1 1l8 8M9 1L1 9" stroke="#d7e0ee" strokeWidth="1.700" />) },
            ])}
            <Slot $w={11} $ml={0} />
          </WinBtns>
        </TitleRow>
        <TabsRow>
          {tabs.map((t, i) => <MenuTab key={t} $active={i === 1}>{t}</MenuTab>)}
          <TabsRight>
            {place(-1, [
              { c: 1497, w: 30, n: <FindLabel>查找</FindLabel> }, { c: 1596, w: 13, n: <FindBox><Caret $c="#666" /></FindBox> },
              { c: 1615, w: 18, n: S(17, 17, <path d={binoPath} fill="none" stroke="#eef2f8" />) },
              { c: 1628, w: 7, n: <Caret /> }, { c: 1637, w: 1, n: <SmallSep /> },
              { c: 1647, w: 10, n: S(9, 6, <path d="M1 5l3.500-3.500L8 5" stroke="#fff" strokeWidth="1.800" fill="none" />) },
              { c: 1668, w: 16, n: <HelpBox>?</HelpBox> },
            ])}
            <Slot $w={4} $ml={0} />
          </TabsRight>
        </TabsRow>
      </BlueHead>

      <Ribbon>
        {ribbon.map((g, gi) => (
          <Group key={gi} $w={g.w} $pl={g.pl}>
            <GroupItems>
              {g.items.map((it: any) => (
                <RItem key={it.t} $w={it.w} $muted={!!it.m}>
                  <RIcon $muted={!!it.m}>{it.i}</RIcon>
                  <RLabel>{it.t}</RLabel>
                  <RCaret>{it.car ? <Caret $c={it.m ? '#aaa' : '#444'} /> : null}</RCaret>
                </RItem>
              ))}
            </GroupItems>
            <GroupLabel $shift={(g as any).shift}>{g.label}</GroupLabel>
          </Group>
        ))}
      </Ribbon>

      <Work>
        <LeftCol>
          <CanvasFrame>
            <CanvasRow>
              <Canvas>
                <RootNode />
                <Lines width="1632" height="760" viewBox={`${CX} ${CY} 1632 760`}>
                  <g fill="none" stroke={line} strokeWidth="2.200">
                    {nodes.map(n => <path key={n.cy} d={`M718 300V${n.cy - 12}Q718 ${n.cy} 732 ${n.cy}H1064`} />)}
                  </g>
                  {nodes.map(n => <circle key={n.cy} cx="1038" cy={n.cy} r="3.400" fill="#fff" stroke={line} strokeWidth="1.200" />)}
                </Lines>
                {nodes.map(n => <MapNode key={n.cy} $x={1062 - CX} $y={n.cy - 21 - CY} $w={n.r - 1062}>{n.t}</MapNode>)}
                <CornerBox />
              </Canvas>
              <VScroll>
                <VThumb />
                <VTop>{S(10, 7, <path d="M1 6l4-4 4 4" stroke="#333" strokeWidth="2" fill="none" />)}</VTop>
                <VBottom>{S(10, 7, <path d="M1 1l4 4 4-4" stroke="#333" strokeWidth="2" fill="none" />)}</VBottom>
              </VScroll>
            </CanvasRow>
            <HScroll>
              {S(7, 10, <path d="M6 1L2 5l4 4" stroke="#333" strokeWidth="2" fill="none" />)}
              <HThumb />
              {S(7, 10, <path d="M1 1l4 4-4 4" stroke="#333" strokeWidth="2" fill="none" />)}
            </HScroll>
          </CanvasFrame>
          <DocTabs>
            <DocArrow>{S(5, 9, <path d="M5 0v9L0 4.500z" fill="#b0b0b0" />)}</DocArrow>
            <DocTabWrap>
              <DocTab>
                {S(14, 16, <><rect width="14" height="16" fill="#3f5fb0" /><path d="M2 5h4.500l.5 3 .5-3H12v9H2z" fill="#e8ecf4" /></>)}
                <DocTabText>网络搭建竞赛考试内容</DocTabText>
                {S(10, 10, <><path d="M1 1h7v2M1 1v7h2" stroke="#999" fill="none" /><path d="M5 5l4 4M9 6v3H6" stroke="#888" fill="none" /></>)}
                <Slot $w={12} $ml={8}>{S(9, 9, <path d="M1 1l7 7M8 1L1 8" stroke="#555" strokeWidth="1.500" />)}</Slot>
              </DocTab>
            </DocTabWrap>
            <DocEnd>{S(5, 9, <path d="M0 0v9l5-4.500z" fill="none" stroke="#999" />)}</DocEnd>
          </DocTabs>
        </LeftCol>
        <SidePanel>
          {sideTabs.map(s => <SideTab key={s.t} $h={s.h}>{s.i}<SideText>{s.t}</SideText></SideTab>)}
        </SidePanel>
      </Work>

      <Status>
        {place(0, [
          { c: 1163, w: 18, n: stList }, { c: 1192, w: 14, n: stFilter }, { c: 1207, w: 7, n: <Caret $c="#555" /> },
          { c: 1223, w: 15, n: stFilter2 }, { c: 1237, w: 7, n: <Caret $c="#555" /> }, { c: 1263, w: 18, n: stPlus },
          { c: 1277, w: 7, n: <Caret $c="#555" /> }, { c: 1294, w: 22, n: <Selected $w={22}>{stFit}</Selected> },
          { c: 1317, w: 18, n: stNote }, { c: 1341, w: 18, n: stCal }, { c: 1365, w: 18, n: stRes }, { c: 1389, w: 18, n: stTag },
          { c: 1426, w: 36, n: <Zoom100>100%</Zoom100> },
          { c: 1464, w: 10, n: S(8, 2, <path d="M0 1h8" stroke="#999" strokeWidth="2" />) },
          { c: 1521, w: 88, n: <Slider><SliderThumb /></Slider> },
          { c: 1580, w: 10, n: S(9, 9, <path d="M4.500 0v9M0 4.500h9" stroke="#999" strokeWidth="1.800" />) },
          { c: 1600, w: 15, n: stFit2 },
          { c: 1630, w: 23, n: <Selected $w={23}>{stMag}</Selected> },
          { c: 1660, w: 16, n: stPanel }, { c: 1673, w: 7, n: <Caret $c="#555" /> },
        ])}
      </Status>

      <Taskbar>
        <StartCell>{tWin}</StartCell>
        <TaskSep />
        <TaskCell>{tVm}</TaskCell>
        <TaskCell>{tFolder}</TaskCell>
        <TaskCell>{tFox}</TaskCell>
        <TaskCell $active>{tBandi}</TaskCell>
        <TaskCell>{tChrome}</TaskCell>
        <TaskCell>{tMind}</TaskCell>
        <Tray>
          {place(-1, [
            { c: 1386, w: 3, n: <TraySep /> },
            { c: 1409, w: 16, n: <Ime>五</Ime> }, { c: 1428, w: 6, n: <ImeBar /> },
            { c: 1449, w: 5, n: <ImeDot /> }, { c: 1456, w: 4, n: <ImeComma>,</ImeComma> },
            { c: 1494, w: 14, n: S(13, 8, <path d="M1 7l5.500-5.500L12 7" stroke="#ddd" strokeWidth="1.300" fill="none" />) },
            { c: 1518, w: 18, n: S(17, 16, <><path d="M4 3h12v9H2V1h6v5H2" fill="none" stroke="#ddd" /><path d="M9 12v3M5 15h8" stroke="#ddd" /></>) },
            { c: 1540, w: 18, n: S(16, 14, <><path d="M1 5h3l4-4v12L4 9H1z" fill="none" stroke="#ddd" /><path d="M10.500 4.500c1.500 1.500 1.500 3.500 0 5" stroke="#ddd" fill="none" /><path d="M13 2.500c2.500 2.500 2.500 6.500 0 9" stroke="#777" fill="none" /></>) },
            { c: 1590, w: 64, n: <Clock>13:36<br />2019/8/28</Clock> },
            { c: 1647, w: 18, n: S(17, 16, <path d="M.7.7h15.600v11H11l-2.500 3-2.500-3H.7z" fill="none" stroke="#eee" />) },
          ])}
          <Slot $w={24} $ml={0} />
        </Tray>
      </Taskbar>

      <BWin>
        <BHead>
          <BLogo>BANDI<BLogoRed>CAM</BLogoRed></BLogo>
          <BPill>班迪录屏</BPill>
          <BVip>VIP</BVip>
          <BHeadIcons>
            {place(-1, [
              { c: 757, w: 16, n: bFolder }, { c: 789, w: 16, n: bClock }, { c: 820, w: 12, n: <BHelpMark>?</BHelpMark> },
              { c: 857, w: 12, n: bMin }, { c: 887, w: 12, n: bMin }, { c: 920, w: 12, n: bClose },
            ])}
          </BHeadIcons>
        </BHead>
        <BTool>
          <BTab $w={71} $on>{bScreen}</BTab>
          <BTab $w={15} $on>{bChevD}</BTab>
          <BTab $w={81}>{bPadDots}</BTab>
          <BTab $w={80}>
            {S(30, 24, <><rect x="3" y="0" width="24" height="12" rx="2" fill="#b4c5d6" /><circle cx="15" cy="6" r="3.500" fill="none" stroke="#3a6b9b" /><text x="15" y="22" fontSize="9" fontWeight="700" fontFamily="Liberation Sans" fill="#b4c5d6" textAnchor="middle" letterSpacing=".5">HDMI</text></>)}
          </BTab>
          <MicCol>
            <MicCell>{bMouse}</MicCell>
            <MicCell>{bMic}</MicCell>
          </MicCol>
          <CamCell>{bWeb}</CamCell>
          <Dots />
          <TimerBox>
            <TimerText>00:00:00</TimerText>
            <BytesText>0 bytes / 169.8GB</BytesText>
          </TimerBox>
          <Pause><PauseBar /><PauseBar /></Pause>
          <RecRing><RecBtn>REC</RecBtn></RecRing>
          <CamBtn>{bCam}</CamBtn>
        </BTool>
        <BSource>
          <DashBox />
          <SourceText>1680x1050 - (0, 0), (1680, 1050) - 显示器 1</SourceText>
          <SourceChev>{bChevU}</SourceChev>
        </BSource>
        <BMain>
          <BSide>
            {sideItems.map(s => <SideItem key={s.t} $on={s.on}><SideIcon>{s.i}</SideIcon>{s.t}</SideItem>)}
            <CutBtn><span>BANDI<BLogoRed $c="#2f5f8c">CUT</BLogoRed></span>{bArrow}</CutBtn>
          </BSide>
          <BContent>
            <CTabs>
              <CTab>{bClap}开始</CTab>
              <CDivider />
              <CTab $on>{bPlay}视频</CTab>
              <CDivider />
              <CTab>{bPic}图像</CTab>
            </CTabs>
            <PathRow>E:\教学录像<PathEnd>{bSmallFolder}/</PathEnd></PathRow>
            <ListArea><ListBar /></ListArea>
            <SortRow>{bList}按日期排序</SortRow>
            <ActRow>
              <ActBtn>播放</ActBtn><ActBtn>编辑</ActBtn><ActBtn>上传</ActBtn><ActBtn>删除</ActBtn>
            </ActRow>
          </BContent>
        </BMain>
        <Spot />
        <Pointer width="11" height="14" viewBox="0 0 11 14"><path d="M1 1v10l3-2.500 2 4 2-1-2-4h4z" fill="#fff" stroke="#222" strokeWidth=".8" /></Pointer>
      </BWin>
    </Page>
  );
}
